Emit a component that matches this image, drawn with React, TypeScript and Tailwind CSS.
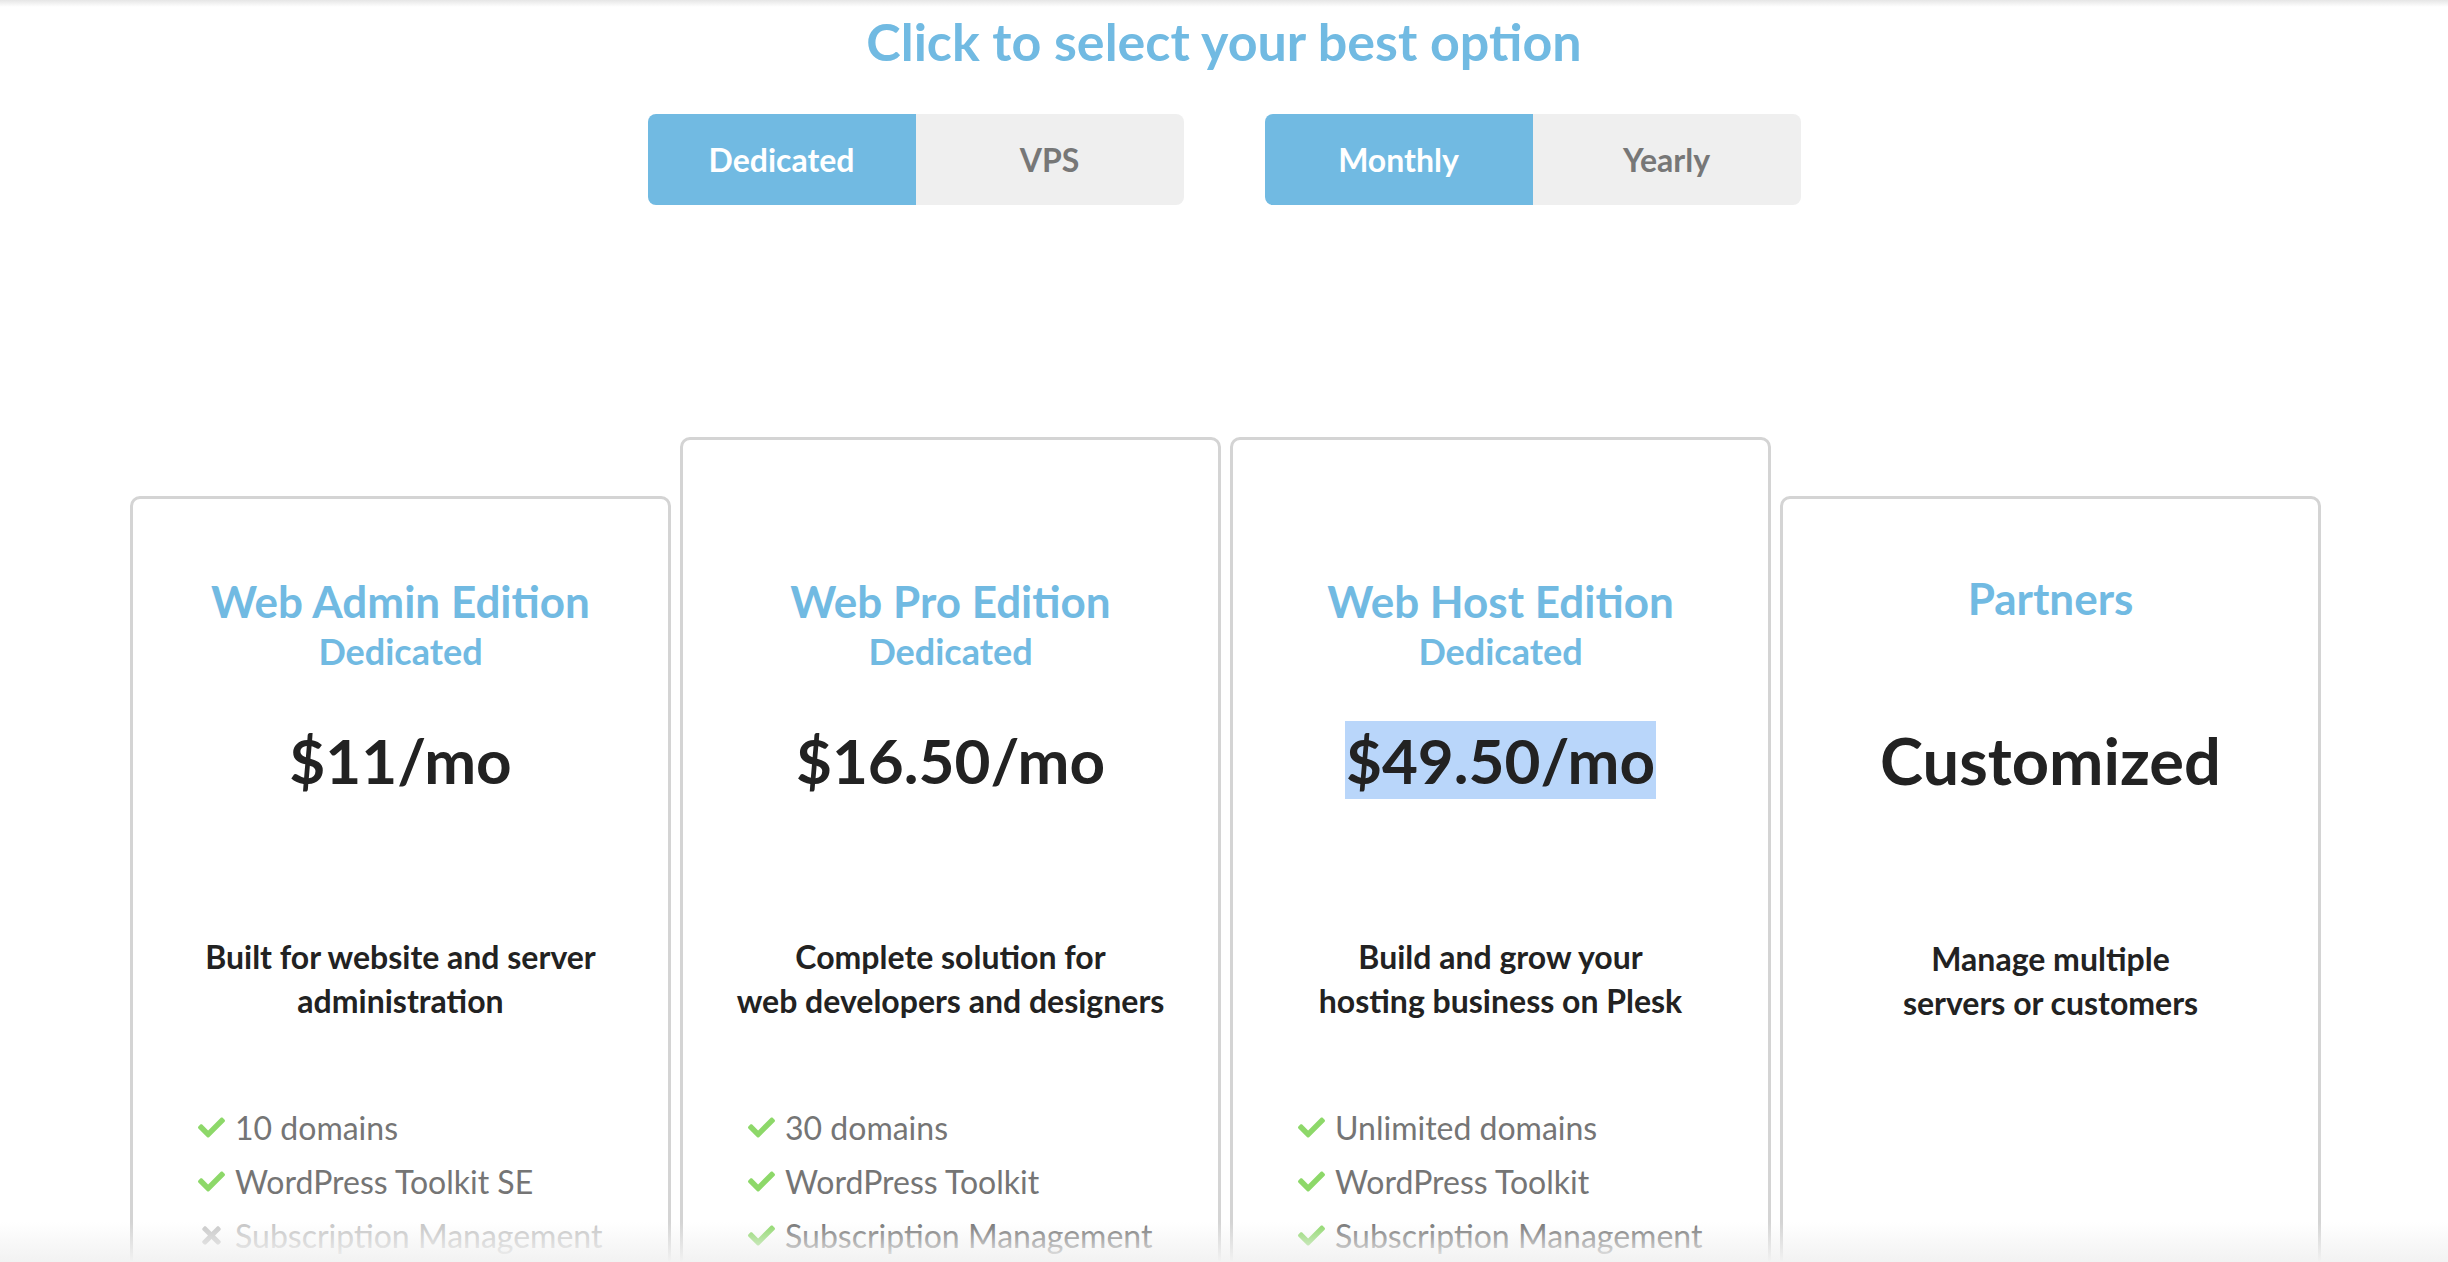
import { FaCheck, FaTimes } from "react-icons/fa"

type Feature = { label: string; on: boolean }

type Plan = {
  name: string
  sub?: string
  price: string
  desc: string[]
  features: Feature[]
  raised?: boolean
  selected?: boolean
}

const plans: Plan[] = [
  {
    name: "Web Admin Edition",
    sub: "Dedicated",
    price: "$11/mo",
    desc: ["Built for website and server", "administration"],
    features: [
      { label: "10 domains", on: true },
      { label: "WordPress Toolkit SE", on: true },
      { label: "Subscription Management", on: false },
    ],
  },
  {
    name: "Web Pro Edition",
    sub: "Dedicated",
    price: "$16.50/mo",
    desc: ["Complete solution for", "web developers and designers"],
    features: [
      { label: "30 domains", on: true },
      { label: "WordPress Toolkit", on: true },
      { label: "Subscription Management", on: true },
    ],
    raised: true,
  },
  {
    name: "Web Host Edition",
    sub: "Dedicated",
    price: "$49.50/mo",
    desc: ["Build and grow your", "hosting business on Plesk"],
    features: [
      { label: "Unlimited domains", on: true },
      { label: "WordPress Toolkit", on: true },
      { label: "Subscription Management", on: true },
    ],
    raised: true,
    selected: true,
  },
  {
    name: "Partners",
    price: "Customized",
    desc: ["Manage multiple", "servers or customers"],
    features: [],
  },
]

function Toggle({ left, right }: { left: string; right: string }) {
  return (
    <div className="flex h-[91px] w-[536px] overflow-hidden rounded-[8px] text-[32px] font-bold">
      <button className="flex flex-1 items-center justify-center bg-[#71bae2] text-white">{left}</button>
      <button className="flex flex-1 items-center justify-center bg-[#efefef] text-[#777777]">{right}</button>
    </div>
  )
}

function PlanCard({ plan }: { plan: Plan }) {
  const top = plan.raised ? "pt-[135px]" : plan.sub ? "mt-[59px] pt-[76px]" : "mt-[59px] pt-[73px]"
  return (
    <div className={"h-[900px] w-[541px] rounded-[10px] border-[3px] border-[#d4d4d4] bg-white " + top}>
      <div className="flex flex-col items-center text-center">
        {plan.sub ? (
          <>
            <div className="text-[44px] font-bold leading-[1.2] text-[#71bae2]">{plan.name}</div>
            <div className="mt-[2px] text-[36px] font-bold leading-[1.2] text-[#71bae2]">{plan.sub}</div>
          </>
        ) : (
          <div className="mb-[7px] h-[94px] text-[44px] font-bold leading-[1.2] text-[#71bae2]">{plan.name}</div>
        )}
        {plan.sub ? (
          <div className="mt-[50px] text-[62px] font-bold leading-[1.2] text-[#222222]">
            {plan.selected ? <span className="bg-[#b9d6fa] px-[1px] py-[2px]">{plan.price}</span> : plan.price}
          </div>
        ) : (
          <div className="mt-[50px] text-[65px] font-bold leading-[1.15] text-[#222222]">{plan.price}</div>
        )}
        <div
          className={
            plan.sub
              ? "mt-[137px] text-[32px] font-bold leading-[44px] text-[#222222]"
              : "mt-[139px] text-[32px] font-bold leading-[44px] text-[#222222]"
          }
        >
          {plan.desc.map((d) => (
            <div key={d}>{d}</div>
          ))}
        </div>
      </div>
      <ul className="mt-[78px] pl-[65px]">
        {plan.features.map((f) => (
          <li key={f.label} className="flex h-[54px] items-center gap-[10px] text-[32px]">
            {f.on ? (
              <FaCheck className="h-[27px] w-[27px] shrink-0 text-[#8dd869]" />
            ) : (
              <FaTimes className="h-[27px] w-[27px] shrink-0 text-[#c8c8c8]" />
            )}
            <span className={f.on ? "text-[#757575]" : "text-[#c5c5c5]"}>{f.label}</span>
          </li>
        ))}
      </ul>
    </div>
  )
}

export default function App() {
  return (
    <div className="relative h-[1262px] overflow-hidden bg-white" style={{ fontFamily: "Lato, 'Open Sans', sans-serif" }}>
      <div className="pointer-events-none absolute inset-x-0 top-0 h-[7px] bg-gradient-to-b from-[#e6e6e6] to-white/0" />
      <h1 className="pt-[10px] text-center text-[52px] font-bold leading-[1.2] text-[#71bae2]">
        Click to select your best option
      </h1>
      <div className="mt-[42px] flex justify-center gap-[81px]">
        <Toggle left="Dedicated" right="VPS" />
        <Toggle left="Monthly" right="Yearly" />
      </div>
      <div className="mt-[232px] flex items-start justify-center gap-[9px] pl-[3px]">
        {plans.map((p) => (
          <PlanCard key={p.name} plan={p} />
        ))}
      </div>
      <div className="pointer-events-none absolute inset-x-0 bottom-0 h-[40px] bg-gradient-to-b from-white/0 to-[#f2f2f2]" />
    </div>
  )
}
